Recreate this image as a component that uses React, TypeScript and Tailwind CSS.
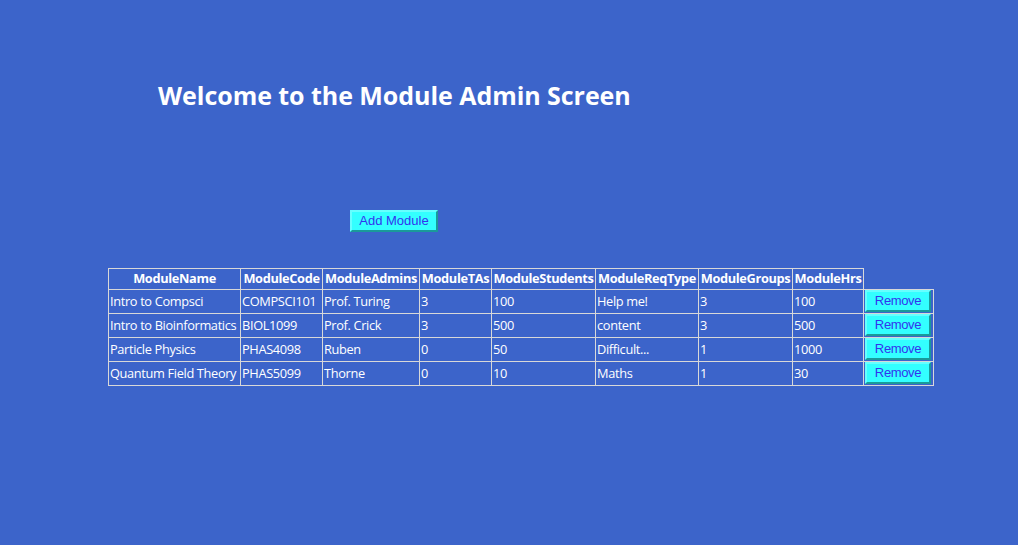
import React from "react";

type Module = {
  name: string;
  code: string;
  admins: string;
  tas: string;
  students: string;
  reqType: string;
  groups: string;
  hrs: string;
};

const modules: Module[] = [
  { name: "Intro to Compsci", code: "COMPSCI101", admins: "Prof. Turing", tas: "3", students: "100", reqType: "Help me!", groups: "3", hrs: "100" },
  { name: "Intro to Bioinformatics", code: "BIOL1099", admins: "Prof. Crick", tas: "3", students: "500", reqType: "content", groups: "3", hrs: "500" },
  { name: "Particle Physics", code: "PHAS4098", admins: "Ruben", tas: "0", students: "50", reqType: "Difficult...", groups: "1", hrs: "1000" },
  { name: "Quantum Field Theory", code: "PHAS5099", admins: "Thorne", tas: "0", students: "10", reqType: "Maths", groups: "1", hrs: "30" },
];

const headers = [
  { label: "ModuleName", w: "w-[132px]" },
  { label: "ModuleCode", w: "w-[82px]" },
  { label: "ModuleAdmins", w: "w-[97px]" },
  { label: "ModuleTAs", w: "w-[72px]" },
  { label: "ModuleStudents", w: "w-[104px]" },
  { label: "ModuleReqType", w: "w-[103px]" },
  { label: "ModuleGroups", w: "w-[94px]" },
  { label: "ModuleHrs", w: "w-[71px]" },
];

const btn =
  "bg-[#33ffff] text-[#3333ee] border-2 border-t-[#66ffff] border-l-[#66ffff] border-b-[#1a9a9a] border-r-[#1a9a9a] font-['Liberation_Sans',Arial,sans-serif] text-[13px] leading-none";

export default function App() {
  return (
    <div className="min-h-screen bg-[#3c64ca] font-['Open_Sans','Noto_Sans',sans-serif] text-white">
      <div className="pt-[78px] pl-[158px]">
        <h1 className="text-[25px] font-bold leading-[34px] tracking-[-0.05px]">
          Welcome to the Module Admin Screen
        </h1>
      </div>

      <div className="pt-[95px] pl-[350px]">
        <button type="button" className={`${btn} h-[22px] w-[88px]`}>
          Add Module
        </button>
      </div>

      <div className="pt-[36px] pl-[108px]">
        <table className="table-fixed border-collapse text-[12.8px] tracking-[-0.35px]">
          <thead>
            <tr>
              {headers.map((h) => (
                <th
                  key={h.label}
                  className={`${h.w} h-[21px] border border-[#d8d8d8] p-0 text-center font-bold leading-[19px] whitespace-nowrap overflow-hidden`}
                >
                  {h.label}
                </th>
              ))}
            </tr>
          </thead>
          <tbody>
            {modules.map((m) => (
              <tr key={m.code}>
                {[m.name, m.code, m.admins, m.tas, m.students, m.reqType, m.groups, m.hrs].map((v, i) => (
                  <td
                    key={i}
                    className="h-[24px] border border-[#d8d8d8] pl-[1px] pr-0 py-0 text-left leading-[22px] whitespace-nowrap overflow-hidden"
                  >
                    {v}
                  </td>
                ))}
                <td className="w-[70px] h-[24px] border border-[#d8d8d8] px-[1px] py-0 align-top">
                  <button type="button" className={`${btn} h-[22px] w-[66px] block`}>
                    Remove
                  </button>
                </td>
              </tr>
            ))}
          </tbody>
        </table>
      </div>
    </div>
  );
}
